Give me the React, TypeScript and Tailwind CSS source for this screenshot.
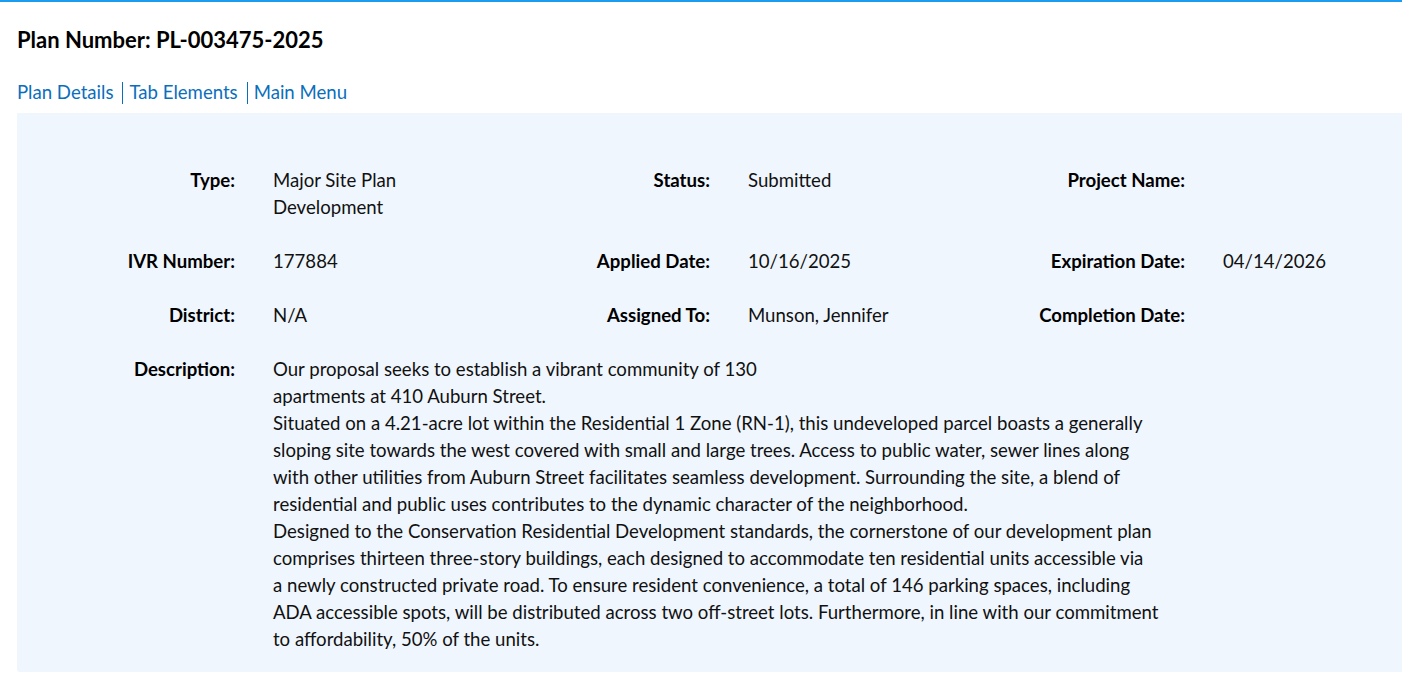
const FIELDS = [
  [
    { label: "Type:", value: "Major Site Plan Development" },
    { label: "Status:", value: "Submitted" },
    { label: "Project Name:", value: "" },
  ],
  [
    { label: "IVR Number:", value: "177884" },
    { label: "Applied Date:", value: "10/16/2025" },
    { label: "Expiration Date:", value: "04/14/2026" },
  ],
  [
    { label: "District:", value: "N/A" },
    { label: "Assigned To:", value: "Munson, Jennifer" },
    { label: "Completion Date:", value: "" },
  ],
];

const DESCRIPTION = [
  "Our proposal seeks to establish a vibrant community of 130",
  "apartments at 410 Auburn Street.",
  "Situated on a 4.21-acre lot within the Residential 1 Zone (RN-1), this undeveloped parcel boasts a generally",
  "sloping site towards the west covered with small and large trees. Access to public water, sewer lines along",
  "with other utilities from Auburn Street facilitates seamless development. Surrounding the site, a blend of",
  "residential and public uses contributes to the dynamic character of the neighborhood.",
  "Designed to the Conservation Residential Development standards, the cornerstone of our development plan",
  "comprises thirteen three-story buildings, each designed to accommodate ten residential units accessible via",
  "a newly constructed private road. To ensure resident convenience, a total of 146 parking spaces, including",
  "ADA accessible spots, will be distributed across two off-street lots. Furthermore, in line with our commitment",
  "to affordability, 50% of the units.",
];

const LINKS = ["Plan Details", "Tab Elements", "Main Menu"];

export default function App() {
  return (
    <div className="min-h-screen bg-white border-t-2 border-[#1c9bf0] font-['Lato',sans-serif] text-[18.6px] leading-[27px] text-[#111] overflow-hidden">
      <div className="pl-[17px] pt-[23px]">
        <h1 className="text-[22px] leading-[30px] font-bold text-black">Plan Number: PL-003475-2025</h1>

        <nav className="mt-[24px] flex items-center">
          {LINKS.map((link, idx) => (
            <div key={link} className="flex items-center">
              {idx > 0 && <span className="ml-[9px] mr-[6px] h-[22px] w-px bg-[#0a6ebd]" />}
              <a href="#" className="text-[#0a6ebd] no-underline">
                {link}
              </a>
            </div>
          ))}
        </nav>

        <div className="mt-[7px] bg-[#eff6fe] rounded-bl-[3px] pl-[18px] pt-[54px] pb-[19px]">
          <div className="grid grid-cols-[200px_199px_200px_199px_200px_1fr] gap-x-[38px] gap-y-[27px]">
            {FIELDS.map((row) =>
              row.map((f) => (
                <div key={f.label} className="contents">
                  <div className="text-right font-bold text-black">{f.label}</div>
                  <div>{f.value}</div>
                </div>
              ))
            )}
            <div className="text-right font-bold text-black">Description:</div>
            <div className="col-span-5 whitespace-nowrap">
              {DESCRIPTION.map((line, idx) => (
                <span key={idx}>
                  {line}
                  {idx < DESCRIPTION.length - 1 && <br />}
                </span>
              ))}
            </div>
          </div>
        </div>
      </div>
    </div>
  );
}
